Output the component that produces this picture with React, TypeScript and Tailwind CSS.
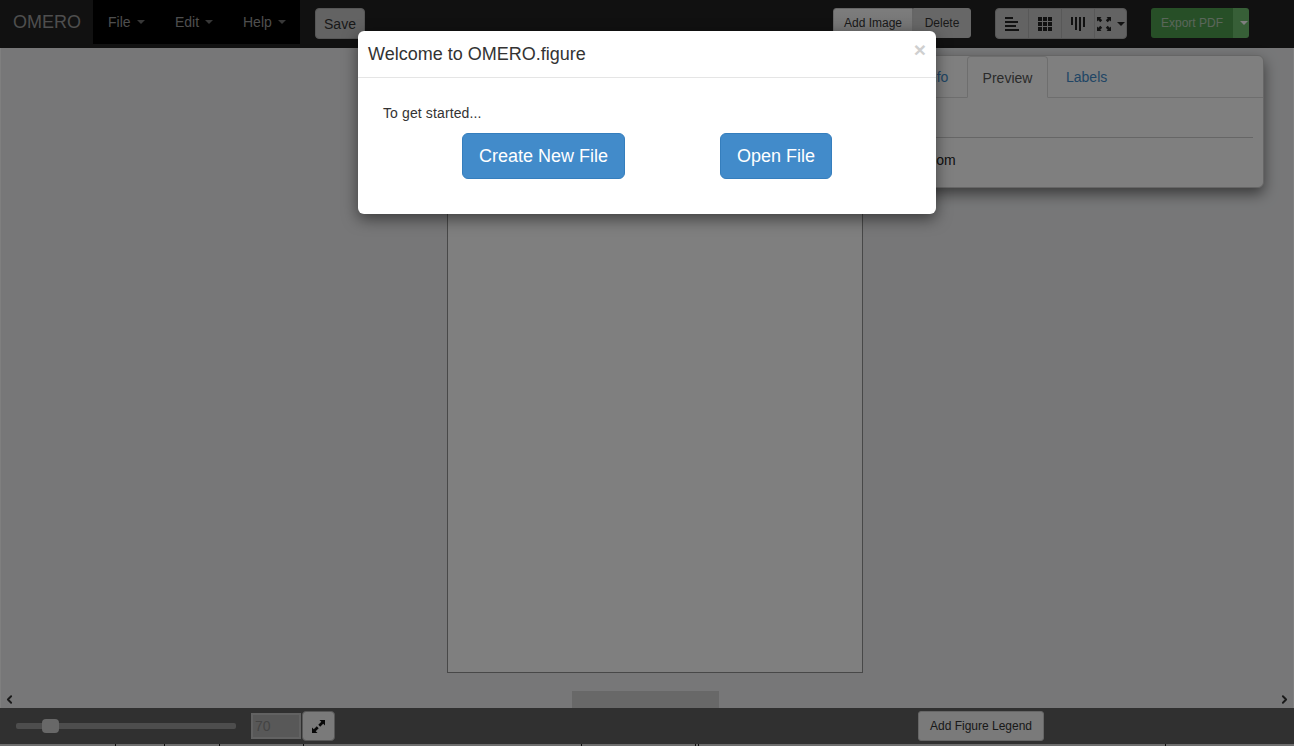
import { ChevronLeft, ChevronRight } from "lucide-react";

function Caret({ className = "" }: { className?: string }) {
  return (
    <span
      className={`ml-[6px] inline-block border-x-[4px] border-t-[4px] border-x-transparent border-t-current align-middle ${className}`}
    />
  );
}

function MenuItem({ label, width }: { label: string; width: string }) {
  return (
    <div className={`flex h-[44px] items-center pl-[15px] text-sm text-[#9d9d9d] ${width}`}>
      {label}
      <Caret className="opacity-70" />
    </div>
  );
}

function AlignLeftIcon() {
  return (
    <svg width="15" height="14" viewBox="0 0 15 14" fill="#222">
      <rect x="0" y="0" width="8" height="2" />
      <rect x="0" y="4" width="13" height="2" />
      <rect x="0" y="8" width="11" height="2" />
      <rect x="0" y="12" width="14" height="2" />
    </svg>
  );
}

function GridIcon() {
  const cells = [0, 5, 10];
  return (
    <svg width="14" height="14" viewBox="0 0 14 14" fill="#222">
      {cells.map((y) =>
        cells.map((x) => <rect key={`${x}-${y}`} x={x} y={y} width="4" height="4" />)
      )}
    </svg>
  );
}

function BarsIcon() {
  return (
    <svg width="14" height="14" viewBox="0 0 14 14" fill="#222">
      <rect x="0" y="0" width="2" height="8" />
      <rect x="4" y="0" width="2" height="13" />
      <rect x="8" y="0" width="2" height="14" />
      <rect x="12" y="0" width="2" height="10" />
    </svg>
  );
}

function FullscreenIcon() {
  return (
    <svg width="14" height="14" viewBox="0 0 14 14" fill="#222">
      <path d="M0 0h4.5L3.2 1.3 5.2 3.3 3.3 5.2 1.3 3.2 0 4.5z" />
      <path d="M14 0H9.5l1.3 1.3-2 2 1.9 1.9 2-2L14 4.5z" />
      <path d="M0 14h4.5l-1.3-1.3 2-2-1.9-1.9-2 2L0 9.5z" />
      <path d="M14 14H9.5l1.3-1.3-2-2 1.9-1.9 2 2L14 9.5z" />
    </svg>
  );
}

function ExpandIcon() {
  return (
    <svg width="13" height="13" viewBox="0 0 13 13" fill="#111">
      <path d="M13 0v5.5l-1.8-1.8-3 3-1.9-1.9 3-3L7.5 0z" />
      <path d="M0 13V7.5l1.8 1.8 3-3 1.9 1.9-3 3L5.5 13z" />
    </svg>
  );
}

const bottomTicks = ["left-[115px]", "left-[164px]", "left-[219px]", "left-[303px]", "left-[581px]", "left-[695px]", "left-[698px]", "left-[1165px]"];

export default function App() {
  return (
    <div className="relative flex h-[746px] w-[1294px] flex-col overflow-hidden bg-white font-['Liberation_Sans',Arial,sans-serif] text-sm text-[#333]">
      <header className="flex h-[48px] shrink-0 items-start bg-[#222]">
        <div className="flex h-[44px] w-[93px] items-center pl-[13px] text-lg text-[#9d9d9d]">OMERO</div>
        <nav className="flex h-[44px] w-[207px] bg-black">
          <MenuItem label="File" width="w-[67px]" />
          <MenuItem label="Edit" width="w-[68px]" />
          <MenuItem label="Help" width="w-[72px]" />
        </nav>
        <button className="mt-[8px] ml-[15px] h-[31px] w-[50px] rounded-[4px] border border-[#adadad] bg-[#c6c6c6] text-sm text-[#333]">
          Save
        </button>
        <div className="mt-[8px] ml-[468px] flex h-[30px] text-xs">
          <button className="w-[80px] rounded-l-[3px] border border-[#ccc] bg-gradient-to-b from-[#fafafa] to-[#e2e2e2]">Add Image</button>
          <button className="w-[58px] rounded-r-[3px] border border-[#ccc] bg-[#cfcfcf]">Delete</button>
        </div>
        <div className="mt-[8px] ml-[24px] flex h-[31px] w-[132px] overflow-hidden rounded-[4px] border border-[#adadad] bg-[#c6c6c6]">
          <div className="flex w-[33px] items-center justify-center border-r border-[#b0b0b0]">
            <AlignLeftIcon />
          </div>
          <div className="flex w-[33px] items-center justify-center border-r border-[#b0b0b0]">
            <GridIcon />
          </div>
          <div className="flex w-[33px] items-center justify-center border-r border-[#b0b0b0]">
            <BarsIcon />
          </div>
          <div className="flex flex-1 items-center justify-center text-[#222]">
            <FullscreenIcon />
            <Caret className="ml-[2px]" />
          </div>
        </div>
        <div className="mt-[8px] ml-[24px] flex h-[30px] text-xs text-[#b5ccb5]">
          <button className="w-[82px] rounded-l-[3px] bg-[#4f9f4f]">Export PDF</button>
          <button className="flex w-[16px] items-center justify-center rounded-r-[3px] bg-[#6fbf6f] text-white">
            <Caret className="ml-0" />
          </button>
        </div>
      </header>

      <main className="relative flex-1 border-x border-white bg-[#eeeff1]">
        <div className="absolute top-[60px] left-[446px] h-[565px] w-[416px] border border-[#909090] bg-white" />
        <div className="absolute bottom-0 left-[571px] h-[17px] w-[147px] bg-[#d0d0d0]" />
        <ChevronLeft size={13} strokeWidth={3.5} className="absolute bottom-[2px] left-[2px] text-[#333]" />
        <ChevronRight size={13} strokeWidth={3.5} className="absolute right-[2px] bottom-[2px] text-[#333]" />

        <aside className="absolute top-[7px] left-[892px] h-[133px] w-[371px] rounded-[6px] border border-[#ccc] bg-white shadow-[0_6px_14px_rgba(0,0,0,0.5)]">
          <div className="flex h-[42px] border-b border-[#ddd] pl-[16px] text-sm">
            <div className="flex w-[57px] items-center pl-[15px] text-[#428bca]">Info</div>
            <div className="h-[42px] w-[81px] rounded-t-[4px] border border-[#ddd] border-b-white bg-white pt-[11px] text-center text-[#555]">
              Preview
            </div>
            <div className="flex items-center pl-[18px] text-[#428bca]">Labels</div>
          </div>
          <div className="mx-[10px] mt-[39px] border-t border-[#ccc]" />
          <div className="mt-[12px] pl-[26px] text-[#222]">Zoom</div>
        </aside>
      </main>

      <footer className="flex h-[36px] shrink-0 items-center bg-[#606060] pl-[16px]">
        <div className="relative h-[6px] w-[220px] rounded-[2px] bg-[#9a9a9a]">
          <div className="absolute top-[-4px] left-[26px] h-[14px] w-[17px] rounded-[4px] bg-[#d0d0d0]" />
        </div>
        <input
          readOnly
          value="70"
          className="ml-[15px] h-[26px] w-[50px] border-2 border-[#c4c4c4] bg-[#b0b0b0] px-[2px] text-sm text-[#888]"
        />
        <button className="ml-px flex h-[30px] w-[33px] items-center justify-center rounded-[4px] border border-[#adadad] bg-[#f4f4f4]">
          <ExpandIcon />
        </button>
        <button className="ml-[583px] h-[30px] w-[126px] rounded-[3px] border border-[#ccc] bg-[#f4f4f4] text-xs text-[#333]">
          Add Figure Legend
        </button>
      </footer>
      <div className="relative h-[2px] shrink-0 bg-[#dddddd]">
        {bottomTicks.map((left) => (
          <span key={left} className={`absolute top-0 h-[2px] w-px bg-[#222] ${left}`} />
        ))}
      </div>

      <div className="absolute inset-0 bg-black/50" />

      <section className="absolute top-[31px] left-[358px] h-[183px] w-[578px] rounded-[6px] bg-white shadow-[0_5px_15px_rgba(0,0,0,0.5)]">
        <div className="relative h-[47px] border-b border-[#e5e5e5] pt-[11px] pl-[10px] text-lg leading-[25px] text-[#333]">
          Welcome to OMERO.figure
          <span className="absolute top-[6px] right-[10px] text-[21px] leading-[25px] font-bold text-[#cfcfcf]">×</span>
        </div>
        <p className="pt-[27px] pl-[25px] leading-[17px] tracking-[0.12px]">To get started...</p>
        <div className="mt-[11px] flex pl-[104px]">
          <button className="h-[46px] w-[163px] rounded-[6px] border border-[#357ebd] bg-[#428bca] text-lg text-white">
            Create New File
          </button>
          <button className="ml-[95px] h-[46px] w-[112px] rounded-[6px] border border-[#357ebd] bg-[#428bca] text-lg text-white">
            Open File
          </button>
        </div>
      </section>
    </div>
  );
}
